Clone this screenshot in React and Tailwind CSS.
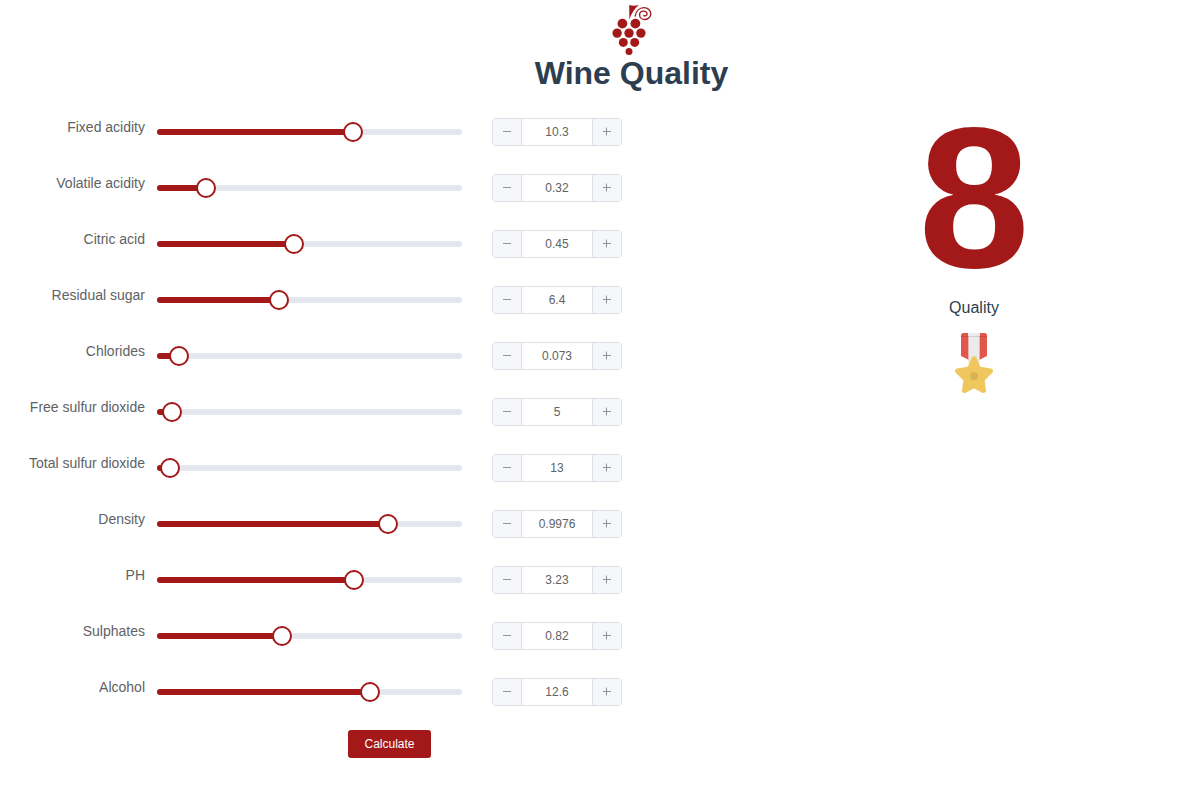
import { useState } from "react";

const FIELDS = [
  { id: "fixed", label: "Fixed acidity", value: 10.3, min: 0, max: 16, step: 0.1 },
  { id: "volatile", label: "Volatile acidity", value: 0.32, min: 0, max: 2, step: 0.01 },
  { id: "citric", label: "Citric acid", value: 0.45, min: 0, max: 1, step: 0.01 },
  { id: "sugar", label: "Residual sugar", value: 6.4, min: 0, max: 16, step: 0.1 },
  { id: "chlorides", label: "Chlorides", value: 0.073, min: 0, max: 1, step: 0.001 },
  { id: "free", label: "Free sulfur dioxide", value: 5, min: 0, max: 100, step: 1 },
  { id: "total", label: "Total sulfur dioxide", value: 13, min: 0, max: 300, step: 1 },
  { id: "density", label: "Density", value: 0.9976, min: 0.98, max: 1.0032, step: 0.0001 },
  { id: "ph", label: "PH", value: 3.23, min: 0, max: 5, step: 0.01 },
  { id: "sulphates", label: "Sulphates", value: 0.82, min: 0, max: 2, step: 0.01 },
  { id: "alcohol", label: "Alcohol", value: 12.6, min: 8, max: 14.6, step: 0.1 },
];

function GrapeLogo() {
  return (
    <svg width="50" height="50" viewBox="607 5 50 50" aria-hidden="true">
      <g fill="#a31919">
        <circle cx="622.4" cy="23.6" r="4.9" />
        <circle cx="635.4" cy="23.6" r="4.9" />
        <circle cx="617.1" cy="33.1" r="4.7" />
        <circle cx="629" cy="33.1" r="4.7" />
        <circle cx="640.9" cy="33.1" r="4.7" />
        <circle cx="623.3" cy="42.4" r="4.5" />
        <circle cx="634.7" cy="42.4" r="4.5" />
        <circle cx="629" cy="51.4" r="3.5" />
        <path d="M629.2 5 Q634 6.3 639 5 C634.5 8.5 631.5 13 629.4 19.5 Z" />
      </g>
      <path
        d="M635.2 16 C636 11 639.5 7.6 644 7.6 C648 7.6 650.8 10.4 650.8 13.8 C650.8 17 648.2 19.5 645 19.5 C641.6 19.5 639.6 17.3 639.6 14.9 C639.6 12.6 641.3 11.1 643.5 11.1 C645.6 11.1 647 12.5 647 14.1 C647 15.6 645.4 16.3 643.8 15.6"
        fill="none"
        stroke="#a31919"
        strokeWidth="1.4"
        strokeLinecap="round"
      />
    </svg>
  );
}

function Medal() {
  return (
    <svg width="40" height="60" viewBox="0 0 40 60" role="img" aria-label="Gold medal">
      <path d="M9 0H14V26.5L7 23V2.5Q7 0 9 0Z" fill="#e2574c" />
      <path d="M31 0H26V26.5L33 23V2.5Q33 0 31 0Z" fill="#e2574c" />
      <path d="M14 0H26V30H14Z" fill="#ebebeb" />
      <path d="M7 3.5H33" stroke="#000" strokeOpacity=".12" />
      <path d="M14.5 3V27M25.5 3V27" stroke="#e2574c" strokeOpacity=".35" />
      <path
        d="M20 25.5 L24.5 36 L36.5 38 L28 46.5 L29.5 57.5 L20 52.5 L10.5 57.5 L12 46.5 L3.5 38 L15.5 36Z"
        fill="#efc75e"
        stroke="#efc75e"
        strokeWidth="5"
        strokeLinejoin="round"
      />
      <circle cx="20" cy="43.2" r="4" fill="#d7b354" />
    </svg>
  );
}

function Sign({ plus }) {
  return (
    <svg width="10" height="10" viewBox="0 0 10 10" stroke="#909399" aria-hidden="true">
      <path d={plus ? "M1 4.5H9M4.5 .5V8.5" : "M1 4.5H9"} />
    </svg>
  );
}

function FieldRow({ field, value, onChange }) {
  const { id, label, min, max, step } = field;
  const percent = Math.min(100, Math.max(0, ((value - min) / (max - min)) * 100));
  const digits = (String(step).split(".")[1] || "").length;
  const change = (n) => onChange(Number(Math.min(max, Math.max(min, n)).toFixed(digits)));

  return (
    <div className="flex h-14 items-start">
      <label htmlFor={id} className="w-[157px] shrink-0 pr-3 text-right text-sm leading-[38px]">
        {label}
      </label>
      <div className="mt-[10px] flex h-7 flex-1 items-center gap-[30px]">
        <div className="relative h-1.5 min-w-0 flex-1 rounded-[3px] bg-[#e4e7ed]">
          <div className="h-1.5 rounded-l-[3px] bg-[#a31919]" style={{ width: `${percent}%` }} />
          <input
            id={id}
            type="range"
            min={min}
            max={max}
            step={step}
            value={value}
            onChange={(e) => change(Number(e.target.value))}
            className="absolute -left-[10px] -top-[7px] h-5 w-[calc(100%+20px)] cursor-pointer appearance-none bg-transparent [&::-webkit-slider-thumb]:size-5 [&::-webkit-slider-thumb]:appearance-none [&::-webkit-slider-thumb]:rounded-full [&::-webkit-slider-thumb]:border-2 [&::-webkit-slider-thumb]:border-solid [&::-webkit-slider-thumb]:border-[#a31919] [&::-webkit-slider-thumb]:bg-white"
          />
        </div>
        <div className="flex h-7 w-[130px] shrink-0 overflow-hidden rounded border border-[#dcdfe6]">
          <button
            type="button"
            aria-label={`Decrease ${label}`}
            onClick={() => change(value - step)}
            className="flex w-[29px] shrink-0 items-center justify-center border-r border-[#dcdfe6] bg-[#f5f7fa]"
          >
            <Sign />
          </button>
          <input
            type="text"
            inputMode="decimal"
            aria-label={`${label} value`}
            value={value}
            onChange={(e) => change(Number(e.target.value) || 0)}
            className="w-0 min-w-0 flex-1 bg-white text-center text-xs outline-none"
          />
          <button
            type="button"
            aria-label={`Increase ${label}`}
            onClick={() => change(value + step)}
            className="flex w-[29px] shrink-0 items-center justify-center border-l border-[#dcdfe6] bg-[#f5f7fa]"
          >
            <Sign plus />
          </button>
        </div>
      </div>
    </div>
  );
}

export default function App() {
  const [values, setValues] = useState(() => Object.fromEntries(FIELDS.map((f) => [f.id, f.value])));

  return (
    <div className="min-h-screen bg-white font-['Liberation_Sans',Arial,sans-serif] text-[#606266]">
      <header className="flex flex-col items-center pt-[5px] pl-[61px] text-[#2c3e50]">
        <GrapeLogo />
        <h1 className="text-[32px] leading-9 font-bold">Wine Quality</h1>
      </header>
      <main className="mt-[17px] grid grid-cols-[622fr_456fr] gap-x-[124px]">
        <form onSubmit={(e) => e.preventDefault()}>
          {FIELDS.map((field) => (
            <FieldRow
              key={field.id}
              field={field}
              value={values[field.id]}
              onChange={(v) => setValues((old) => ({ ...old, [field.id]: v }))}
            />
          ))}
          <div className="flex justify-center pt-1.5 pl-[157px]">
            <button type="submit" className="h-7 rounded-[3px] bg-[#a31919] px-4 text-xs text-white">
              Calculate
            </button>
          </div>
        </form>
        <section className="flex flex-col items-center text-[#2c3e50]">
          <div className="text-[200px] leading-[180px] font-bold text-[#a31919]">8</div>
          <p className="mt-2 text-base">Quality</p>
          <div className="mt-[13px]">
            <Medal />
          </div>
        </section>
      </main>
    </div>
  );
}
